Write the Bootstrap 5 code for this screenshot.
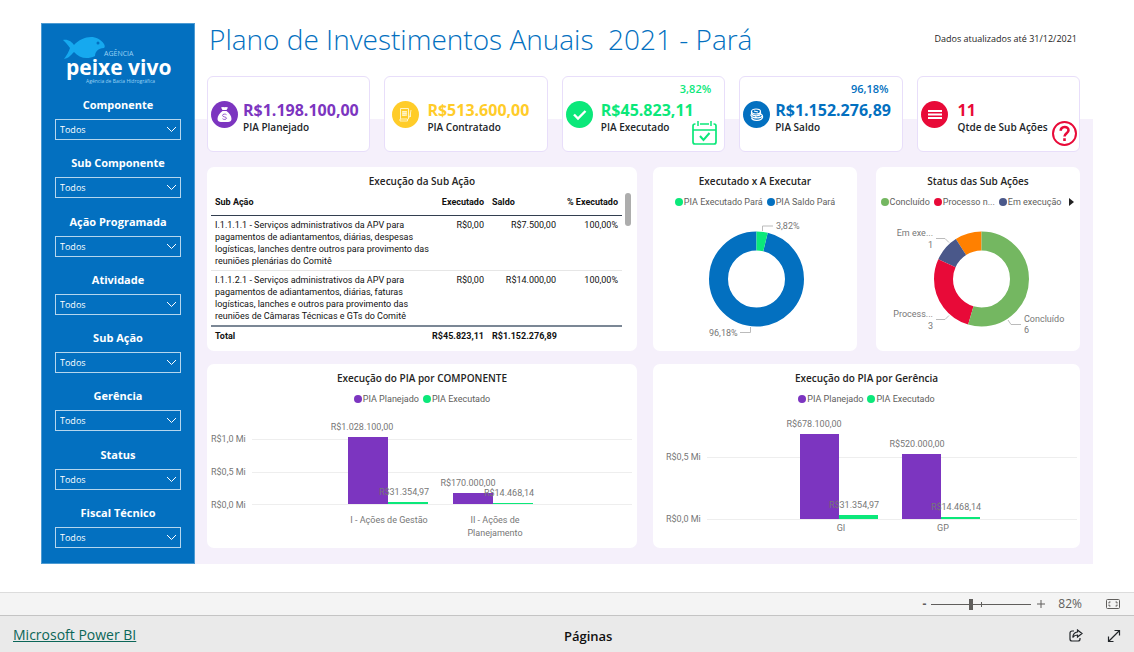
<!DOCTYPE html>
<html lang="pt-BR">
<head>
<meta charset="utf-8">
<meta name="viewport" content="width=device-width, initial-scale=1">
<title>Plano de Investimentos Anuais 2021 - Pará</title>
<link href="https://cdn.jsdelivr.net/npm/bootstrap@5.3.0/dist/css/bootstrap.min.css" rel="stylesheet">
<style>
  :root { --azul:#0370c0; --roxo:#7c35c0; --verde:#0be87a; --amarelo:#ffcc29; --vermelho:#e80a38; --lilas:#f5f0fb; }
  body { font-family:"Open Sans","Noto Sans",sans-serif; font-size:9px; line-height:12px; color:#252423; background:#fff; }
  .report { padding:23px 41px 28px; }
  .filters { width:154px; flex:none; background:var(--azul); color:#fff; padding:12px 13px 15px; border:1px solid #4d9bd3; }
  .filters .logo { width:114px; height:48px; margin-bottom:12px; }
  .filters label { font-size:11px; font-weight:700; line-height:18px; margin-bottom:5px; }
  .filters .form-select { height:21px; padding:0 20px 0 4px; font-size:9px; line-height:20px; color:#fff; border:1px solid #b5d6ee; border-radius:0;
    background-color:var(--azul); background-position:right 3px center; background-size:11px 11px;
    background-image:url("data:image/svg+xml,%3Csvg xmlns='http://www.w3.org/2000/svg' viewBox='0 0 11 11'%3E%3Cpath d='M1 3l4.500 4.500L10 3' fill='none' stroke='white'/%3E%3C/svg%3E"); }
  .board { background:linear-gradient(#fff 96px,var(--lilas) 96px); padding:0 13px 16px 12px; min-width:0; }
  .heading { height:53px; }
  h1 { font-size:28px; line-height:32px; font-weight:300; color:var(--azul); margin:0; padding-left:2px; white-space:pre; }
  .updated { padding:10px 3px; }
  .kpis { display:grid; grid-template-columns:repeat(5,1fr); gap:14px; margin-bottom:15px; }
  .kpi { height:76px; background:#fff; border:1px solid #e8defa; border-radius:6px; padding:0 3px; }
  .kpi-top { height:24px; line-height:24px; font-size:11px; font-weight:600; padding-right:10px; }
  .kpi-icon { width:27px; height:27px; flex:none; }
  .kpi-value { font-size:16px; line-height:18px; font-weight:700; white-space:nowrap; }
  .kpi-name { font-size:10px; line-height:16px; font-weight:600; white-space:nowrap; }
  .gap-s { gap:5px; } .gap-m { gap:8px; } .gap-l { gap:10px; }
  .kpi-mark { right:6px; bottom:5px; width:27px; height:27px; }
  .kpi-help { right:1px; bottom:4px; }
  .c-roxo { color:var(--roxo); } .c-verde { color:var(--verde); } .c-amarelo { color:var(--amarelo); } .c-azul { color:var(--azul); } .c-vermelho { color:var(--vermelho); }
  .panels { display:grid; grid-template-columns:430fr 427fr; gap:13px 16px; }
  .pair { display:grid; grid-template-columns:1fr 1fr; gap:19px; }
  .panel { background:#fff; border-radius:7px; height:184px; min-width:0; overflow:hidden; }
  .panel h2 { font-size:10px; line-height:14px; font-weight:600; text-align:center; margin:7px 0 8px; }
  .legend-row { height:12px; font-family:Roboto,sans-serif; font-size:9px; color:#605e5c; display:flex; justify-content:center; gap:4px; white-space:nowrap; margin-bottom:5px; }
  .legend-row span::before { content:""; display:inline-block; width:8px; height:8px; border-radius:50%; background:currentColor; margin-right:1px; vertical-align:-1px; }
  .legend-row b { font-weight:400; color:#605e5c; }
  .plot { display:block; width:100%; height:138px; font-family:Roboto,sans-serif; font-size:9px; fill:#777; }
  .plot .rule { stroke:#eee; } .plot .lead-line { fill:none; stroke:#bbb; }
  .grid-data { font-family:Roboto,sans-serif; width:411px; margin-left:4px; table-layout:fixed; border-collapse:collapse; color:#111; }
  .grid-data th, .grid-data td { padding:3px 4px; vertical-align:top; white-space:nowrap; }
  .grid-data thead th { height:27px; padding-top:8px; border-bottom:1px solid #333f50; }
  .grid-data tbody tr + tr { border-top:1px solid #e6e6e6; }
  .grid-data tbody td { height:55px; }
  .grid-data tfoot { border-top:2px solid #7b8795; font-weight:700; }
  .scroll-thumb { width:6px; height:33px; border-radius:3px; background:#adadad; margin:5px 0 0 3px; }
  .zoom-bar { height:24px; background:#f4f4f4; border-top:1px solid #dcdcdc; border-bottom:1px solid #c4c4c4; padding-right:14px; color:#605e5c; font-size:12px; }
  .zoom-range { width:100px; height:12px; appearance:none; margin:0 6px 0 5px; background:linear-gradient(#605e5c,#605e5c) 50px 50%/1px 5px no-repeat,linear-gradient(#605e5c,#605e5c) 0 50%/100% 1px no-repeat; }
  .zoom-range::-webkit-slider-thumb { appearance:none; width:4px; height:11px; background:#605e5c; border:0; }
  .zoom-level { margin:0 24px 0 13px; }
  .page-bar { height:36px; background:#eaeaea; display:grid; grid-template-columns:13fr auto 12fr; align-items:center; padding:4px 13px 0; }
  .page-bar a { font-size:14px; color:#0b6658; }
  .page-bar strong { font-size:13px; font-weight:600; color:#111; }
  .tool { border:0; background:none; padding:0; color:inherit; line-height:1; display:flex; }
</style>
</head>
<body>
<div class="min-vh-100 d-flex flex-column">
<main class="report d-flex flex-grow-1">
  <aside class="filters d-flex flex-column">
    <svg class="logo mx-auto flex-shrink-0" viewBox="0 0 114 48" role="img" aria-label="Agência Peixe Vivo">
      <path fill="#16a9ef" d="M2 4c5-1 9 2 11 5C21 0 36-3 43 8c1 2 1 3 0 4-6 0-9 4-9 8-8 4-16 2-21-4-3 3-5 6-10 7 3-4 5-8 6-11-2-3-4-5-7-8z"/>
      <circle cx="37" cy="7" r="1.500" fill="#0370c0"/>
      <text x="43" y="20" font-size="7" fill="#9bd3f5">AGÊNCIA</text>
      <text x="5" y="39" font-size="21" font-weight="700" fill="#fff">peixe vivo</text>
      <text x="25" y="47" font-size="5" fill="#9bd3f5">Agência de Bacia Hidrográfica</text>
    </svg>
    <div class="d-flex flex-column justify-content-between flex-grow-1">
      <div class="d-flex flex-column"><label class="text-center" for="f1">Componente</label><select id="f1" class="form-select"><option>Todos</option></select></div>
      <div class="d-flex flex-column"><label class="text-center" for="f2">Sub Componente</label><select id="f2" class="form-select"><option>Todos</option></select></div>
      <div class="d-flex flex-column"><label class="text-center" for="f3">Ação Programada</label><select id="f3" class="form-select"><option>Todos</option></select></div>
      <div class="d-flex flex-column"><label class="text-center" for="f4">Atividade</label><select id="f4" class="form-select"><option>Todos</option></select></div>
      <div class="d-flex flex-column"><label class="text-center" for="f5">Sub Ação</label><select id="f5" class="form-select"><option>Todos</option></select></div>
      <div class="d-flex flex-column"><label class="text-center" for="f6">Gerência</label><select id="f6" class="form-select"><option>Todos</option></select></div>
      <div class="d-flex flex-column"><label class="text-center" for="f7">Status</label><select id="f7" class="form-select"><option>Todos</option></select></div>
      <div class="d-flex flex-column"><label class="text-center" for="f8">Fiscal Técnico</label><select id="f8" class="form-select"><option>Todos</option></select></div>
    </div>
  </aside>

  <section class="board flex-grow-1">
    <header class="heading d-flex justify-content-between">
      <h1>Plano de Investimentos Anuais  2021 - Pará</h1>
      <span class="updated">Dados atualizados até 31/12/2021</span>
    </header>

    <div class="kpis">
      <article class="kpi c-roxo">
        <div class="kpi-top"></div>
        <div class="d-flex align-items-start gap-s">
          <svg class="kpi-icon" viewBox="0 0 27 27"><circle cx="13.500" cy="13.500" r="13.500" fill="currentColor"/><path fill="#fff" d="M10 6.500q1.500-1 3.500-.3 2-.7 3.500.3L15.500 9h-4zM11.500 10h4c3 2 5 5 5 8 0 2-1.500 3-3.500 3h-7c-2 0-3.500-1-3.500-3 0-3 2-6 5-8z"/><path d="M15.500 13.700c-1-1-4-.8-4 .7 0 2 4 1 4 2.800 0 1.500-3 1.600-4 .5" fill="none" stroke="currentColor" stroke-width=".8"/></svg>
          <div><div class="kpi-value">R$1.198.100,00</div><div class="kpi-name text-dark">PIA Planejado</div></div>
        </div>
      </article>
      <article class="kpi c-amarelo">
        <div class="kpi-top"></div>
        <div class="d-flex align-items-start gap-m ps-1">
          <svg class="kpi-icon" viewBox="0 0 27 27"><circle cx="13.500" cy="13.500" r="13.500" fill="currentColor"/><g fill="none" stroke="#fff3c4"><path d="M8.500 7.500h8v10.500h-1v2h-7.500v-2h7M8.500 7.500v10.500M10.500 10.500h4M10.500 12.500h4M10.500 14.500h3"/><path d="M19 9l-1 6-1.500 2M18.500 12v4"/></g><path fill="#fff3c4" d="M10 10h5v5h-5z" opacity=".7"/></svg>
          <div><div class="kpi-value">R$513.600,00</div><div class="kpi-name text-dark">PIA Contratado</div></div>
        </div>
      </article>
      <article class="kpi c-verde position-relative">
        <div class="kpi-top text-end">3,82%</div>
        <div class="d-flex align-items-start gap-m">
          <svg class="kpi-icon" viewBox="0 0 27 27"><circle cx="13.500" cy="13.500" r="13.500" fill="currentColor"/><path d="M8 13.500l4 4 7.500-7.500" fill="none" stroke="#fff" stroke-width="2.400"/></svg>
          <div><div class="kpi-value">R$45.823,11</div><div class="kpi-name text-dark">PIA Executado</div></div>
        </div>
        <svg class="kpi-mark position-absolute" viewBox="0 0 27 27" fill="none" stroke="currentColor" stroke-width="2"><path d="M4.500 5H4a2 2 0 0 0-2 2v16a2 2 0 0 0 2 2h19a2 2 0 0 0 2-2V7a2 2 0 0 0-2-2h-.5M9 5h9M2 11h23" stroke-width="1.700"/><path d="M7 2v5M20 2v5" stroke-width="1.500"/><path d="M9 17l3.500 4 6-7"/></svg>
      </article>
      <article class="kpi c-azul">
        <div class="kpi-top text-end">96,18%</div>
        <div class="d-flex align-items-start gap-s">
          <svg class="kpi-icon" viewBox="0 0 27 27"><circle cx="13.500" cy="13.500" r="13.500" fill="currentColor"/><g fill="none" stroke="#fff" stroke-width="1.200"><ellipse cx="13" cy="10.500" rx="4.500" ry="2.500"/><path d="M8.500 10.500v2c1 3 8 3 9 .5v-2M8 13.500c-1 3 6 4.500 9 2.500M8.500 16.500c1 4 10 3.500 11 0 .5-3-2-4.500-5-3.500M12 16c2 1.500 6 1 7-1M11 10l4 1"/></g></svg>
          <div><div class="kpi-value">R$1.152.276,89</div><div class="kpi-name text-dark">PIA Saldo</div></div>
        </div>
      </article>
      <article class="kpi c-vermelho position-relative">
        <div class="kpi-top"></div>
        <div class="d-flex align-items-start gap-l">
          <svg class="kpi-icon" viewBox="0 0 27 27"><circle cx="13.500" cy="13.500" r="13.500" fill="currentColor"/><path d="M7 10h14M7 13.500h14M7 17h14" stroke="#fff" stroke-width="2"/></svg>
          <div><div class="kpi-value">11</div><div class="kpi-name text-dark">Qtde de Sub Ações</div></div>
        </div>
        <svg class="kpi-mark kpi-help position-absolute" viewBox="0 0 27 27" fill="none" stroke="currentColor"><circle cx="13.500" cy="13.500" r="11.500" stroke-width="2"/><path d="M9.700 10.800c0-5 7.800-5 7.800-.6 0 3-4 3-4 6.300M13.500 18.300v2.700" stroke-width="2.600"/></svg>
      </article>
    </div>

    <div class="panels">
      <section class="panel">
        <h2 class="mb-0">Execução da Sub Ação</h2>
        <div class="d-flex">
        <table class="grid-data">
          <colgroup><col style="width:213px"><col style="width:64px"><col style="width:72px"><col style="width:62px"></colgroup>
          <thead><tr><th>Sub Ação</th><th class="text-end">Executado</th><th>Saldo</th><th class="text-end">% Executado</th></tr></thead>
          <tbody>
            <tr><td>I.1.1.1.1 - Serviços administrativos da APV para<br>pagamentos de adiantamentos, diárias, despesas<br>logísticas, lanches dentre outros para provimento das<br>reuniões plenárias do Comitê</td><td class="text-end">R$0,00</td><td class="text-end">R$7.500,00</td><td class="text-end">100,00%</td></tr>
            <tr><td>I.1.1.2.1 - Serviços administrativos da APV para<br>pagamentos de adiantamentos, diárias, faturas<br>logísticas, lanches e outros para provimento das<br>reuniões de Câmaras Técnicas e GTs do Comitê</td><td class="text-end">R$0,00</td><td class="text-end">R$14.000,00</td><td class="text-end">100,00%</td></tr>
          </tbody>
          <tfoot><tr><td>Total</td><td class="text-end">R$45.823,11</td><td class="text-end">R$1.152.276,89</td><td></td></tr></tfoot>
        </table>
        <div class="scroll-thumb"></div>
        </div>
      </section>

      <div class="pair">
        <section class="panel">
          <h2>Executado x A Executar</h2>
          <div class="legend-row"><span class="c-verde"><b>PIA Executado Pará</b></span><span class="c-azul"><b>PIA Saldo Pará</b></span></div>
          <svg class="plot" viewBox="0 0 204 138">
            <g fill="none" stroke-width="19" transform="rotate(-90 103.500 66)">
              <circle cx="103.500" cy="66" r="38" stroke="#0370c0" pathLength="100" stroke-dasharray="96.180 3.820" stroke-dashoffset="-3.820"/>
              <circle cx="103.500" cy="66" r="38" stroke="#0be87a" pathLength="100" stroke-dasharray="3.820 96.180"/>
            </g>
            <path class="lead-line" d="M109.500 18v-5H120M87 119.500h10.500V114"/>
            <text x="123" y="16">3,82%</text><text x="56" y="123">96,18%</text>
          </svg>
        </section>
        <section class="panel">
          <h2>Status das Sub Ações</h2>
          <div class="legend-row"><span style="color:#74b761"><b>Concluído</b></span><span class="c-vermelho"><b>Processo n...</b></span><span style="color:#4a588a"><b>Em execução</b></span><svg class="ms-1" width="6" height="12" viewBox="0 0 6 12"><path d="M0 2l5 4-5 4z" fill="#222"/></svg></div>
          <svg class="plot" viewBox="0 0 204 138">
            <g fill="none" stroke-width="19" transform="rotate(-90 105.500 66)">
              <circle cx="105.500" cy="66" r="38" stroke="#ff8000" pathLength="11" stroke-dasharray="1 10" stroke-dashoffset="-10"/>
              <circle cx="105.500" cy="66" r="38" stroke="#4a588a" pathLength="11" stroke-dasharray="1 10" stroke-dashoffset="-9"/>
              <circle cx="105.500" cy="66" r="38" stroke="#e80a38" pathLength="11" stroke-dasharray="3 8" stroke-dashoffset="-6"/>
              <circle cx="105.500" cy="66" r="38" stroke="#74b761" pathLength="11" stroke-dasharray="6 5"/>
            </g>
            <path class="lead-line" d="M60 25.500h9l4 4M60 106.500h9l4-4M132 107l3 4.500h10"/>
            <g text-anchor="end"><text x="57" y="23">Em exe...</text><text x="57" y="35">1</text><text x="57" y="104">Process...</text><text x="57" y="116">3</text></g>
            <text x="148" y="109">Concluído</text><text x="148" y="120">6</text>
          </svg>
        </section>
      </div>

      <section class="panel">
        <h2>Execução do PIA por COMPONENTE</h2>
        <div class="legend-row"><span class="c-roxo"><b>PIA Planejado</b></span><span class="c-verde"><b>PIA Executado</b></span></div>
        <svg class="plot" viewBox="0 0 430 138">
          <path class="rule" d="M45 29.500h380M45 62.500h380M45 94.500h380"/>
          <text x="4" y="32">R$1,0 Mi</text><text x="4" y="65">R$0,5 Mi</text><text x="4" y="98">R$0,0 Mi</text>
          <path fill="#7c35c0" d="M141 27h40v67h-40zM246 83h40v11h-40z"/><path fill="#0be87a" d="M181 92h40v2h-40zM286 93h40v1h-40z"/>
          <g text-anchor="middle"><text x="155" y="20">R$1.028.100,00</text><text x="197" y="85">R$31.354,97</text><text x="261" y="76">R$170.000,00</text><text x="302" y="86">R$14.468,14</text>
          <text x="182" y="113">I - Ações de Gestão</text><text x="288" y="113">II - Ações de</text><text x="288" y="126">Planejamento</text></g>
        </svg>
      </section>

      <section class="panel">
        <h2>Execução do PIA por Gerência</h2>
        <div class="legend-row"><span class="c-roxo"><b>PIA Planejado</b></span><span class="c-verde"><b>PIA Executado</b></span></div>
        <svg class="plot" viewBox="0 0 427 138">
          <path class="rule" d="M54 47.500h370M54 109.500h370"/>
          <text x="13" y="50">R$0,5 Mi</text><text x="13" y="112">R$0,0 Mi</text>
          <path fill="#7c35c0" d="M147 24h39v85h-39zM249 44h39v65h-39z"/><path fill="#0be87a" d="M186 105h39v4h-39zM288 107h39v2h-39z"/>
          <g text-anchor="middle"><text x="161" y="17">R$678.100,00</text><text x="264" y="37">R$520.000,00</text><text x="201" y="98">R$31.354,97</text><text x="303" y="100">R$14.468,14</text>
          <text x="188" y="121">GI</text><text x="290" y="121">GP</text></g>
        </svg>
      </section>
    </div>
  </section>
</main>

<div class="zoom-bar d-flex align-items-center justify-content-end">
  <button class="tool fw-bold" aria-label="Reduzir">-</button>
  <input class="zoom-range" type="range" min="0" max="100" value="39" aria-label="Zoom">
  <button class="tool" aria-label="Ampliar"><svg width="8" height="8" viewBox="0 0 8 8"><path d="M0 4h8M4 0v8" stroke="currentColor"/></svg></button>
  <span class="zoom-level">82%</span>
  <button class="tool" aria-label="Ajustar à página"><svg width="14" height="10" viewBox="0 0 14 10" fill="none" stroke="currentColor"><rect x=".5" y=".5" width="13" height="9" rx="1"/><path d="M3 4.500v-1.500h1.500M9.500 3H11v1.500M11 5.500V7H9.500M4.500 7H3V5.500"/></svg></button>
</div>
<footer class="page-bar">
  <div><a href="#">Microsoft Power BI</a></div>
  <strong>Páginas</strong>
  <div class="d-flex justify-content-end align-items-center text-dark">
    <button class="tool me-4" aria-label="Compartilhar"><svg width="14" height="14" viewBox="0 0 14 14" fill="none" stroke="currentColor" stroke-width="1.200"><path d="M5 2H3a2 2 0 0 0-2 2v6a2 2 0 0 0 2 2h6a2 2 0 0 0 2-2V9"/><path d="M8.500 1l4.500 3.500L8.500 8V6C6.500 6 5 6.500 3.800 8.500 4 5 5.500 3.300 8.500 3z"/></svg></button>
    <button class="tool" aria-label="Tela cheia"><svg width="14" height="14" viewBox="0 0 14 14" fill="none" stroke="currentColor" stroke-width="1.200"><path d="M1.500 12.500l11-11M7.500 1.500h5v5M1.500 7.500v5h5"/></svg></button>
  </div>
</footer>
</div>
<script src="https://cdn.jsdelivr.net/npm/bootstrap@5.3.0/dist/js/bootstrap.bundle.min.js"></script>
</body>
</html>
